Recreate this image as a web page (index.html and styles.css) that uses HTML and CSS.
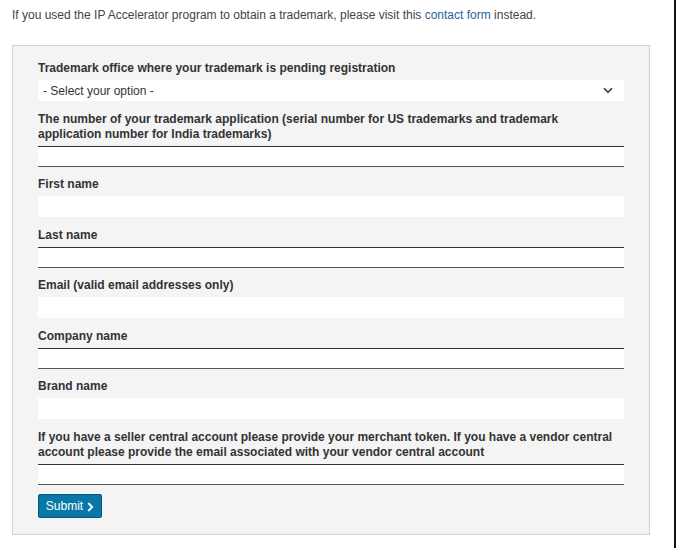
FILE: index.html
```html
<!DOCTYPE html>
<html>
<head>
<meta charset="utf-8">
<link rel="stylesheet" href="styles.css">
</head>
<body>
<div class="page">
  <p class="intro">If you used the IP Accelerator program to obtain a trademark, please visit this <a href="#" class="link">contact form</a> instead.</p>
  <form class="panel">
    <div class="field">
      <label class="label">Trademark office where your trademark is pending registration</label>
      <div class="select">
        <span>- Select your option -</span>
        <svg class="chev" width="10" height="7" viewBox="0 0 10 7"><path d="M1 1.2 L5 5.2 L9 1.2" fill="none" stroke="#333" stroke-width="1.6"/></svg>
      </div>
    </div>
    <div class="field">
      <label class="label">The number of your trademark application (serial number for US trademarks and trademark application number for India trademarks)</label>
      <div class="input lined"></div>
    </div>
    <div class="field">
      <label class="label">First name</label>
      <div class="input"></div>
    </div>
    <div class="field">
      <label class="label">Last name</label>
      <div class="input lined"></div>
    </div>
    <div class="field">
      <label class="label">Email (valid email addresses only)</label>
      <div class="input"></div>
    </div>
    <div class="field">
      <label class="label">Company name</label>
      <div class="input lined"></div>
    </div>
    <div class="field">
      <label class="label">Brand name</label>
      <div class="input"></div>
    </div>
    <div class="field">
      <label class="label">If you have a seller central account please provide your merchant token. If you have a vendor central account please provide the email associated with your vendor central account</label>
      <div class="input lined"></div>
    </div>
    <button type="button" class="submit">Submit <svg width="7" height="10" viewBox="0 0 7 10"><path d="M1.2 1 L5.2 5 L1.2 9" fill="none" stroke="#fff" stroke-width="1.8"/></svg></button>
  </form>
</div>
</body>
</html>
```

FILE: styles.css
```css
html {
  background: #fff;
  border-right: 2px solid #111;
  min-height: 100%;
}
body {
  margin: 0;
  font-family: Arial, "Liberation Sans", sans-serif;
  font-size: 12px;
  color: #333;
}
.page {
  padding: 8px 0 0 12px;
}
.intro {
  margin: 0;
  line-height: 15px;
  color: #444;
}
.link {
  color: #2a6496;
  text-decoration: none;
}
.panel {
  margin-top: 22px;
  width: 586px;
  background: #f4f4f4;
  border: 1px solid #d0d0d0;
  padding: 14px 25px 16px 25px;
}
.field {
  display: flex;
  flex-direction: column;
  margin-bottom: 9.5px;
}
.label {
  font-weight: bold;
  line-height: 15px;
  padding-top: 1px;
  margin-bottom: 4px;
  color: #333;
}
.select {
  height: 21px;
  background: #fff;
  display: flex;
  align-items: center;
  justify-content: space-between;
  padding: 0 11px 0 5px;
  color: #333;
}
.chev {
  display: block;
}
.input {
  height: 21px;
  background: #fff;
  box-sizing: border-box;
}
.input.lined {
  border-top: 1px solid #333;
  border-bottom: 1px solid #555;
}
.submit {
  width: 64px;
  height: 24px;
  background: #0a77a9;
  border: 1px solid #06577d;
  border-radius: 2px;
  color: #fff;
  font-family: Arial, "Liberation Sans", sans-serif;
  font-size: 12px;
  padding: 0;
  display: flex;
  align-items: center;
  justify-content: center;
  gap: 4px;
}
.submit svg {
  display: block;
  margin-top: 2px;
}
```
